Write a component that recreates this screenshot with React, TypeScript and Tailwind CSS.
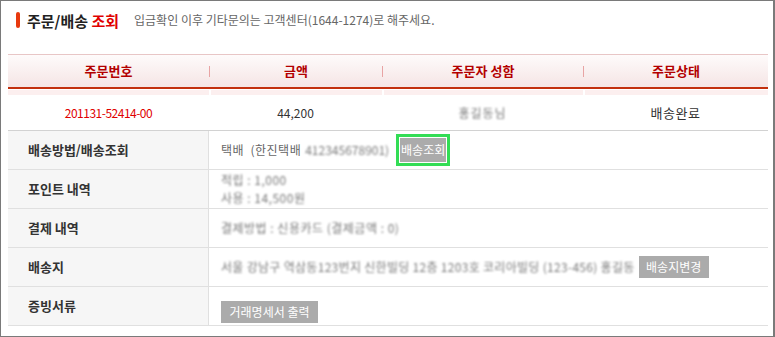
const font = "font-['Noto_Sans_CJK_KR','Noto_Sans',sans-serif]";

const cols = "grid grid-cols-[201px_173px_201px_185px]";

const heads = ["주문번호", "금액", "주문자 성함", "주문상태"];

function Blur({ children, className = "" }: { children: React.ReactNode; className?: string }) {
  // masked personal data in the screenshot
  return (
    <span className={`inline-block text-[#7a7a7a] blur-[1px] whitespace-nowrap ${className}`}>
      {children}
    </span>
  );
}

function GrayButton({ label, className = "" }: { label: string; className?: string }) {
  return (
    <span
      className={`inline-flex items-center justify-center bg-[#ababab] text-white text-[12px] h-[22px] whitespace-nowrap ${className}`}
    >
      {label}
    </span>
  );
}

function DetailRow({ label, children }: { label: string; children: React.ReactNode }) {
  return (
    <div className="flex h-[39px] border-b border-[#e0e0e0]">
      <div className="w-[201px] shrink-0 bg-[#f6f6f6] border-r border-[#e0e0e0] flex items-center pl-[20px] text-[13px] font-bold text-[#333]">
        {label}
      </div>
      <div className="flex-1 flex items-center pl-[12px] text-[12px] text-[#666]">{children}</div>
    </div>
  );
}

export default function App() {
  return (
    <div className={`w-[775px] h-[337px] bg-white border-t border-l border-b border-r-2 border-[#7a7a7a] ${font}`}>
      {/* title */}
      <div className="mt-[11px] ml-[15px] h-[16px] flex items-center">
        <span className="w-[4px] h-[16px] rounded-full bg-[#e8390e]" />
        <h2 className="ml-[7px] text-[15px] font-bold text-[#222] leading-none">
          주문/배송 <span className="text-[#e00000]">조회</span>
        </h2>
        <p className="ml-[15px] text-[12px] text-[#666] leading-none">
          입금확인 이후 기타문의는 고객센터(1644-1274)로 해주세요.
        </p>
      </div>

      <div className="mt-[26px] ml-[7px] w-[760px]">
        {/* header */}
        <div className={`${cols} h-[35px] border-t border-[#e8c6c6] bg-gradient-to-b from-[#fefbfb] to-[#f5e5e5] border-b-2 border-b-[#c2300e]`}>
          {heads.map((h, i) => (
            <div key={h} className="flex items-center">
              {i > 0 && <span className="w-px h-[11px] bg-[#e8a4a4]" />}
              <span className="flex-1 text-center text-[13px] font-bold text-[#b30000]">{h}</span>
            </div>
          ))}
        </div>
        <div className={`${cols} mt-px h-[5px]`}>
          {heads.map((h, i) => (
            <div key={h} className={`bg-[#fcefef] ${i > 0 ? "border-l-2 border-white" : ""}`} />
          ))}
        </div>

        {/* order row */}
        <div className={`${cols} h-[35px] items-center text-center text-[12px] text-[#333]`}>
          <span className="text-[#e00000] tracking-[-0.5px]">201131-52414-00</span>
          <span>44,200</span>
          <span><Blur className="tracking-[1px]">홍길동님</Blur></span>
          <span className="text-[13px] tracking-[0.5px]">배송완료</span>
        </div>

        {/* details */}
        <div className="border-t border-[#d2d2d2]">
          <DetailRow label="배송방법/배송조회">
            <span className="tracking-[0.5px]">택배 &nbsp;(한진택배</span>
            <Blur className="ml-[4px]">412345678901)</Blur>
            <span className="ml-[7px] border-[3px] border-[#33dd55] p-px">
              <GrayButton label="배송조회" className="w-[46px] h-[24px] text-[11.5px]" />
            </span>
          </DetailRow>
          <DetailRow label="포인트 내역">
            <div className="flex flex-col items-start leading-[18px]">
              <Blur className="tracking-[0.5px]">적립 : 1,000</Blur>
              <Blur className="tracking-[0.5px]">사용 : 14,500원</Blur>
            </div>
          </DetailRow>
          <DetailRow label="결제 내역">
            <Blur className="tracking-[0.5px]">결제방법 : 신용카드 (결제금액 : 0)</Blur>
          </DetailRow>
          <DetailRow label="배송지">
            <Blur className="tracking-[0.3px]">서울 강남구 역삼동123번지 신한빌딩 12층 1203호 코리아빌딩 (123-456) 홍길동</Blur>
            <GrayButton label="배송지변경" className="ml-[4px] w-[70px]" />
          </DetailRow>
          <DetailRow label="증빙서류">
            <GrayButton label="거래명세서 출력" className="mt-[11px] w-[97px]" />
          </DetailRow>
        </div>
      </div>
    </div>
  );
}
